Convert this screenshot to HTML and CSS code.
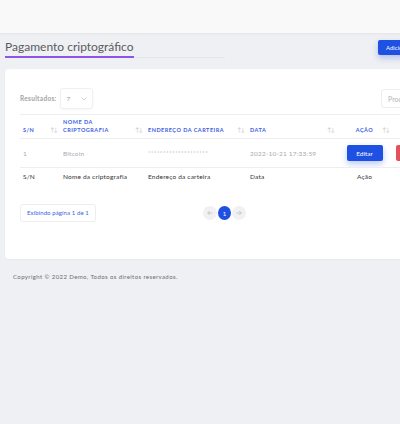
FILE: index.html
```html
<!DOCTYPE html>
<html>
  <head>
    <meta charset="utf-8">
    <title>Pagamento criptográfico</title>
    <link rel="stylesheet" href="styles.css">
  </head>
  <body>

    <div id="topbar"></div>

    <div id="main">
      <div class="titleRow">
        <div class="titleLine">
          <h4 class="pageTitle">Pagamento criptográfico</h4>
        </div>
        <button class="addBtn">Adicionar novo</button>
      </div>

      <div class="card">
        <div class="tableTools">
          <label class="lengthLabel">Resultados:
            <span class="lengthSelect">7
              <svg width="6" height="4" viewBox="0 0 6 4"><path d="M0.5 0.5 L3 3 L5.5 0.5" fill="none" stroke="#bbb" stroke-width="0.7"/></svg>
            </span>
          </label>
          <input class="searchInput" type="text" placeholder="Procurar...">
        </div>

        <table class="dataTable">
          <colgroup>
            <col style="width:40px">
            <col style="width:85px">
            <col style="width:102px">
            <col style="width:90px">
            <col style="width:55px">
            <col style="width:60px">
          </colgroup>
          <thead>
            <tr>
              <th>S/N<span class="sort">↑↓</span></th>
              <th>Nome da criptografia<span class="sort">↑↓</span></th>
              <th>Endereço da carteira<span class="sort">↑↓</span></th>
              <th>Data<span class="sort">↑↓</span></th>
              <th class="center">Ação<span class="sort">↑↓</span></th>
              <th></th>
            </tr>
          </thead>
          <tbody>
            <tr>
              <td>1</td>
              <td>Bitcoin</td>
              <td class="masked">********************</td>
              <td>2022-10-21 17:33:59</td>
              <td class="center"><button class="editBtn">Editar</button></td>
              <td><button class="delBtn">Excluir</button></td>
            </tr>
          </tbody>
          <tfoot>
            <tr>
              <td>S/N</td>
              <td>Nome da criptografia</td>
              <td>Endereço da carteira</td>
              <td>Data</td>
              <td class="center">Ação</td>
              <td></td>
            </tr>
          </tfoot>
        </table>

        <div class="tableBottom">
          <div class="info">Exibindo página 1 de 1</div>
          <div class="paging">
            <span class="pageBtn">
              <svg width="6" height="6" viewBox="0 0 6 6"><path d="M5.5 3 H0.8 M2.8 1 L0.8 3 L2.8 5" fill="none" stroke="#b8b8c0" stroke-width="0.7"/></svg>
            </span>
            <span class="pageBtn current">1</span>
            <span class="pageBtn">
              <svg width="6" height="6" viewBox="0 0 6 6"><path d="M0.5 3 H5.2 M3.2 1 L5.2 3 L3.2 5" fill="none" stroke="#b8b8c0" stroke-width="0.7"/></svg>
            </span>
          </div>
        </div>
      </div>

      <div class="footer">Copyright © 2022 Demo, Todos os direitos reservados.</div>
    </div>

  </body>
</html>
```

FILE: styles.css
```css
html,body{
  font-family: Lato, "Noto Sans", Arial, sans-serif;
  margin: 0px;
  padding: 0px;
  overflow: hidden;
}

body{
  background-color: #EFF0F3;
  width: 400px;
  height: 424px;
}

#topbar{
  height: 33px;
  background-color: #F9F9FA;
  box-shadow: 0px 1px 3px rgba(0,0,0,0.05);
}

#main{
  width: 461px;
  padding: 0px 5px;
}

.titleRow{
  display: flex;
  justify-content: space-between;
  align-items: flex-start;
  padding-top: 2px;
}

.titleLine{
  width: 220px;
  border-bottom: solid 1px #E6E7EA;
}

.pageTitle{
  display: inline-block;
  margin: 0px;
  font-size: 12px;
  font-weight: 400;
  color: #5A5A60;
  padding-bottom: 2px;
  border-bottom: solid 2px #8E56E8;
  margin-bottom: -1px;
}

.addBtn{
  margin-top: 5px;
  width: 88px;
  height: 15px;
  border: none;
  border-radius: 2px;
  background-color: #1E50E2;
  color: #FFF;
  font-family: inherit;
  font-size: 6px;
  text-align: left;
  padding-left: 8px;
  box-shadow: 0px 3px 6px rgba(30,80,226,0.3);
}

.card{
  margin-top: 11px;
  background-color: #FFF;
  border-radius: 4px;
  padding: 20px 15px 37px 15px;
  box-shadow: 0px 1px 2px rgba(0,0,0,0.03);
}

.tableTools{
  display: flex;
  justify-content: space-between;
  align-items: center;
  height: 19px;
}

.lengthLabel{
  display: flex;
  align-items: center;
  font-size: 6.5px;
  font-weight: 700;
  color: #A3A3A8;
  letter-spacing: 0.3px;
}

.lengthSelect{
  display: flex;
  justify-content: space-between;
  align-items: center;
  margin-left: 3px;
  width: 20px;
  height: 19px;
  padding: 0px 5px 0px 6px;
  border: solid 1px #F0F0F2;
  border-radius: 3px;
  color: #999;
  font-weight: 400;
  box-shadow: 0px 1px 3px rgba(0,0,0,0.04);
}

.searchInput{
  box-sizing: border-box;
  width: 70px;
  height: 19px;
  border: solid 1px #EEEEF0;
  border-radius: 3px;
  padding: 0px 6px;
  font-family: inherit;
  font-size: 7px;
  color: #555;
}

.searchInput::placeholder{
  color: #B4B4BA;
}

.dataTable{
  margin-top: 6px;
  table-layout: fixed;
  border-collapse: collapse;
  width: 432px;
}

.dataTable th{
  position: relative;
  height: 19px;
  padding: 0px 12px 4px 3px;
  border-top: solid 1px #EEEEF0;
  border-bottom: solid 1px #EEEEF0;
  text-align: left;
  font-size: 5.5px;
  font-weight: 700;
  letter-spacing: 0.5px;
  line-height: 8px;
  text-transform: uppercase;
  color: #3D5EE1;
  vertical-align: bottom;
}

.dataTable .center{
  text-align: center;
}

.dataTable th.center{
  padding-left: 12px;
}

.sort{
  position: absolute;
  right: 3px;
  bottom: 4px;
  font-size: 6px;
  font-weight: 400;
  letter-spacing: -1px;
  color: #C8C8CE;
}

.dataTable td{
  padding: 0px 3px;
  font-size: 6.5px;
  letter-spacing: 0.2px;
  white-space: nowrap;
  overflow: hidden;
}

.dataTable tbody td{
  height: 28px;
  color: #A9A9AE;
  border-bottom: solid 1px #EEEEF0;
}

.dataTable tbody td.masked{
  font-size: 5px;
  letter-spacing: 0.9px;
}

.dataTable tfoot td{
  height: 14px;
  color: #333;
  font-weight: 400;
  padding-top: 1px;
}

.editBtn{
  width: 36px;
  height: 16px;
  border: none;
  border-radius: 2px;
  background-color: #1E50E2;
  color: #FFF;
  font-family: inherit;
  font-size: 6.5px;
  box-shadow: 0px 3px 6px rgba(30,80,226,0.3);
}

.delBtn{
  margin-left: 1px;
  width: 40px;
  height: 16px;
  border: none;
  border-radius: 2px;
  background-color: #E5505D;
  color: #FFF;
  font-family: inherit;
  font-size: 6.5px;
}

.tableBottom{
  display: flex;
  align-items: center;
  margin-top: 21px;
}

.info{
  height: 16px;
  line-height: 16px;
  padding: 0px 6px;
  width: 62px;
  border: solid 1px #EEEEF0;
  border-radius: 3px;
  font-size: 6px;
  color: #3D5EE1;
  letter-spacing: 0.1px;
  white-space: nowrap;
}

.paging{
  display: flex;
  align-items: center;
  gap: 1px;
  margin-left: 107px;
}

.pageBtn{
  display: flex;
  justify-content: center;
  align-items: center;
  width: 14px;
  height: 14px;
  border-radius: 50%;
  background-color: #F1F1F3;
  font-size: 6px;
  color: #FFF;
}

.pageBtn.current{
  width: 13px;
  background-color: #1E50E2;
}

.footer{
  padding: 14px 8px;
  font-size: 6px;
  color: #6B6B70;
  letter-spacing: 0.4px;
}
```
